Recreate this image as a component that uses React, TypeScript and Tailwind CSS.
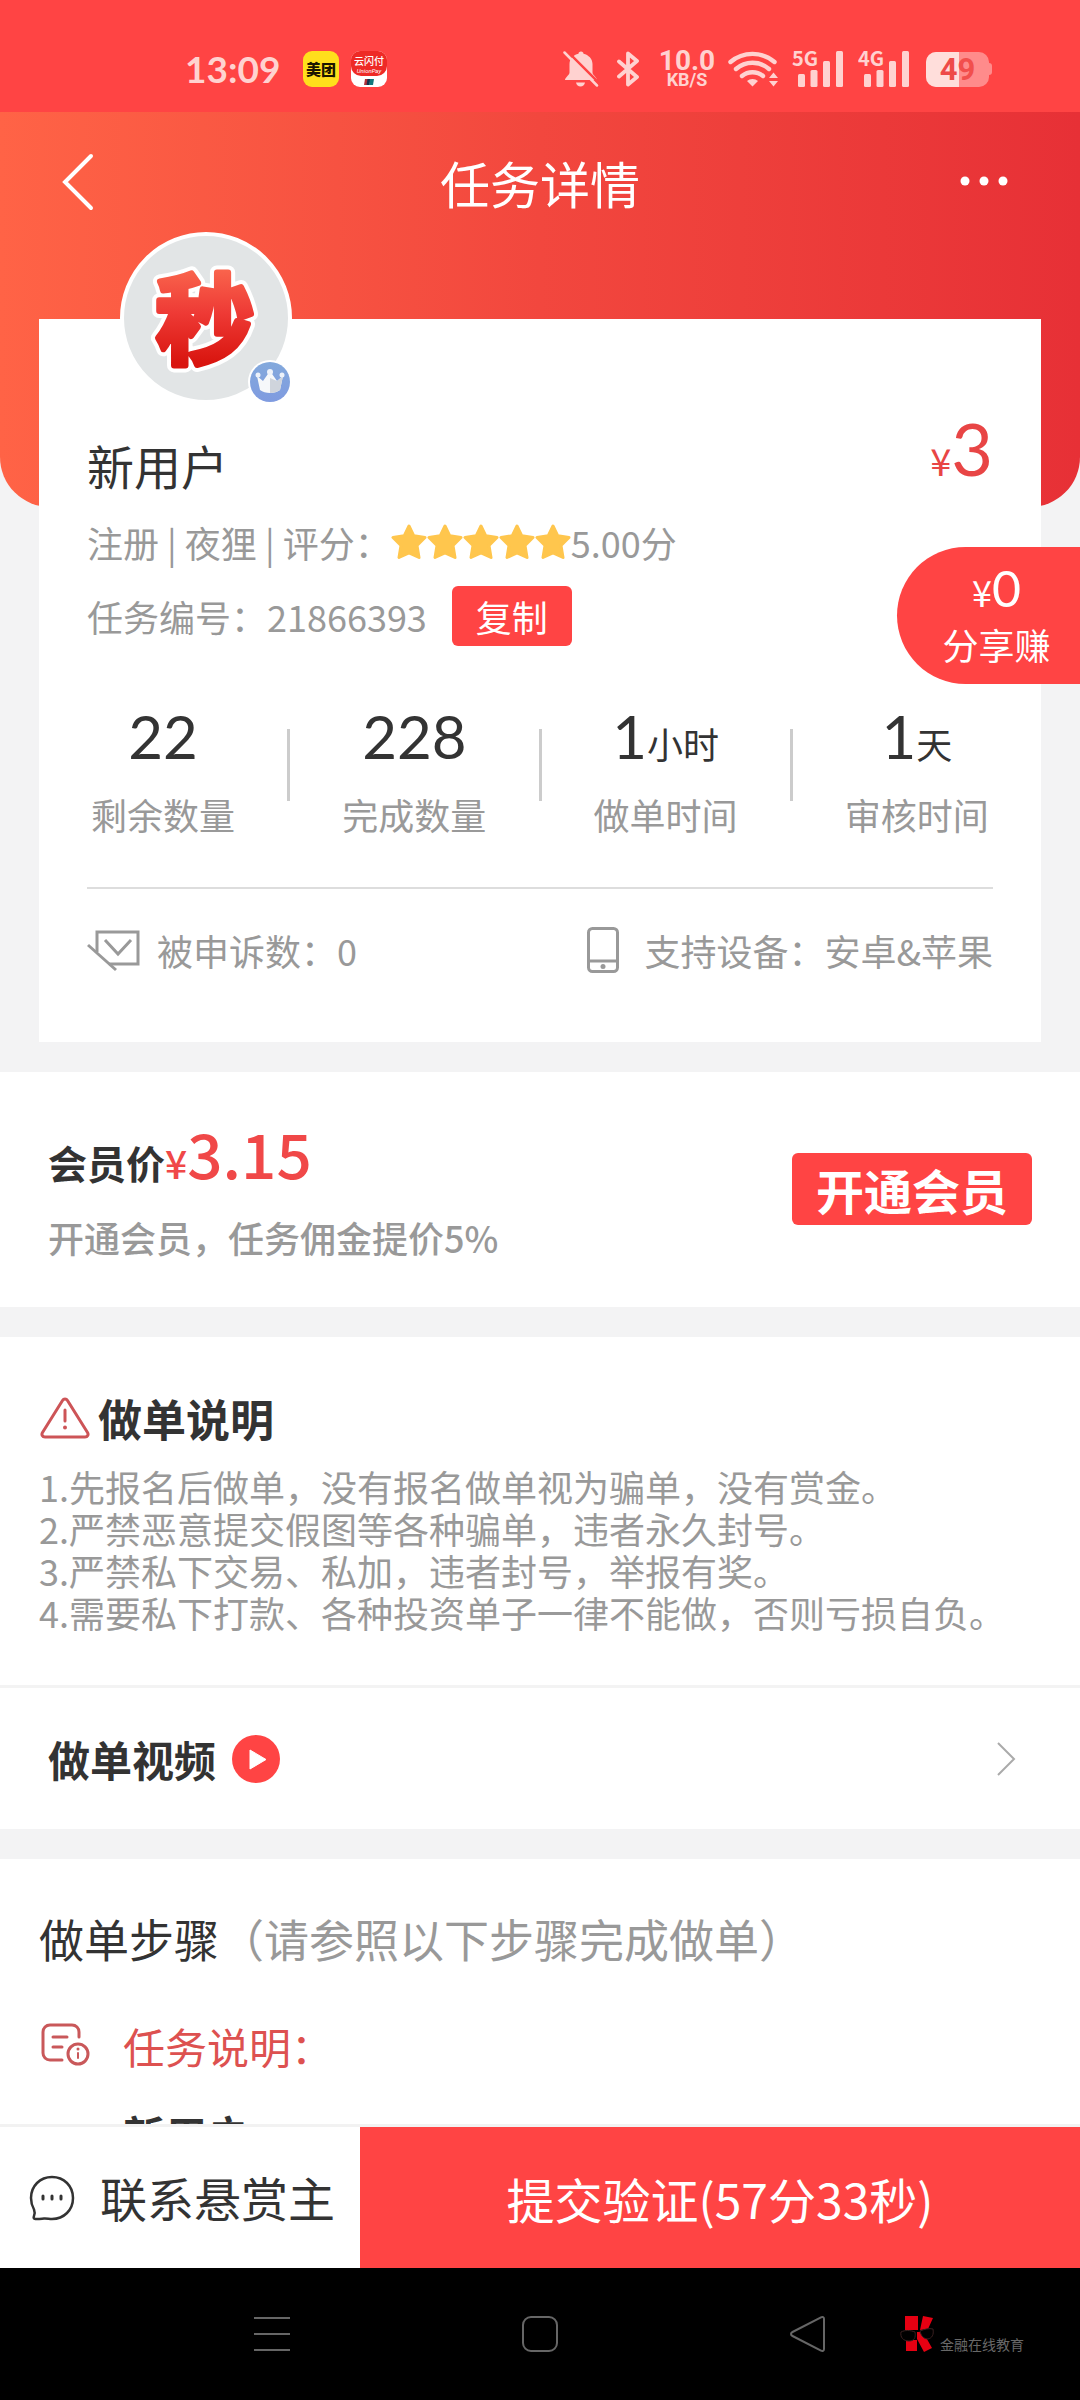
import { Fragment } from "react";

const stats = [
  { value: "22", unit: "", label: "剩余数量" },
  { value: "228", unit: "", label: "完成数量" },
  { value: "1", unit: "小时", label: "做单时间" },
  { value: "1", unit: "天", label: "审核时间" },
];

const rules = [
  "1.先报名后做单，没有报名做单视为骗单，没有赏金。",
  "2.严禁恶意提交假图等各种骗单，违者永久封号。",
  "3.严禁私下交易、私加，违者封号，举报有奖。",
  "4.需要私下打款、各种投资单子一律不能做，否则亏损自负。",
];

function BellOffIcon() {
  return (
    <svg className="h-9 w-9" viewBox="0 0 36 36" fill="none" aria-hidden>
      <path
        d="M18 0.5c1.600 0 2.400 1 2.500 2.200 5 1.200 9 5 9 10.300v8.500c0 2.500 4.500 5 4.500 7.500H2c0-2.500 4.500-5 4.500-7.500V13c0-5.300 4-9.100 9-10.300 0-1.200.9-2.200 2.500-2.200z"
        fill="#ffd2d0"
      />
      <path d="M13 31.500h9c-.5 2.500-2.300 4-4.500 4s-4-1.500-4.500-4z" fill="#ffd2d0" />
      <path d="M3 -1 38 34" stroke="#ff4444" strokeWidth="2.500" />
      <path d="M1.500 1.500 34 34.500" stroke="#ffd2d0" strokeWidth="2.500" strokeLinecap="round" />
    </svg>
  );
}

function BluetoothIcon() {
  return (
    <svg className="h-9 w-[22px]" viewBox="0 0 22 36" fill="none" aria-hidden>
      <path
        d="M2 10.500 20 26 11 33.500V2.500l9 7.500L2 25.500"
        stroke="#ffd2d0"
        strokeWidth="3.800"
        strokeLinecap="round"
        strokeLinejoin="round"
      />
    </svg>
  );
}

function WifiIcon() {
  return (
    <svg className="h-9 w-[50px]" viewBox="0 0 50 36" fill="none" aria-hidden>
      <g stroke="#ffd2d0" strokeWidth="4.400" strokeLinecap="round">
        <path d="M2.500 11a34 34 0 0 1 44 0" />
        <path d="M8 18a25 25 0 0 1 33 0" />
        <path d="M14 25a16.500 16.500 0 0 1 21 0" />
      </g>
      <path d="M24.500 35.500 19 30c3-2.800 8-2.800 11 0z" fill="#ffd2d0" />
      <path d="M45.500 21.500 50 27h-9zM45.500 35.500 50 30h-9z" fill="#ffd2d0" />
    </svg>
  );
}

function Signal({ label }: { label: string }) {
  return (
    <svg className="h-[38px] w-[52px]" viewBox="0 0 52 38" aria-hidden>
      <g fill="#ffd2d0">
        <rect x="6" y="24" width="7" height="13" rx="1.500" />
        <rect x="18.500" y="20" width="7" height="17" rx="1.500" />
        <rect x="31" y="11" width="7" height="26" rx="1.500" />
        <rect x="44" y="1" width="7" height="36" rx="1.500" />
      </g>
      <text x="0" y="16" fill="#ffd2d0" fontSize="20" fontWeight="700" fontFamily="'Noto Sans CJK SC', sans-serif">
        {label}
      </text>
    </svg>
  );
}

function Battery() {
  return (
    <div className="flex items-center">
      <div className="relative flex h-[35px] w-[63px] items-center justify-center overflow-hidden rounded-[10px] bg-[#ff8b8b]">
        <span className="absolute inset-y-0 left-0 w-[33px] bg-[#ffdedb]" />
        <span className="relative font-[Roboto,sans-serif] text-[31px] leading-none font-bold">
          <span className="text-[#ee4a48]">4</span>
          <span className="text-[#f24f4d]">9</span>
        </span>
      </div>
      <span className="h-3 w-[3px] rounded-r-sm bg-[#ff8b8b]" />
    </div>
  );
}

function StatusBar() {
  return (
    <div className="flex h-28 shrink-0 items-center justify-between bg-[#ff4444] pt-[26px] pr-[88px] pl-[185px]">
      <div className="flex items-center">
        <time className="w-[118px] font-[Lato,sans-serif] text-[37px] leading-9 font-bold text-[#ffd2d0]">13:09</time>
        <span className="flex h-9 w-9 items-center justify-center rounded-[9px] bg-[#ffdf1c] text-[15px] font-black text-[#1c1600]">
          美团
        </span>
        <span className="ml-3 flex h-9 w-9 flex-col items-center overflow-hidden rounded-[9px] bg-white">
          <span className="flex w-full flex-col items-center rounded-b-[10px] bg-[#ee2a26] pt-1 pb-[2px] text-white">
            <span className="text-[10px] leading-3 font-medium">云闪付</span>
            <span className="font-[Roboto,sans-serif] text-[6px] leading-[7px] italic">UnionPay</span>
          </span>
          <svg className="mt-[3px] h-[6px] w-[10px]" viewBox="0 0 10 6" aria-hidden>
            <path d="M1 0h4L4 6H0z" fill="#b0323a" />
            <path d="M3.500 0h3l-1 6h-3z" fill="#16314e" />
            <path d="M6 0h4L9 6H5z" fill="#12777c" />
          </svg>
        </span>
      </div>
      <div className="flex items-center">
        <BellOffIcon />
        <span className="w-[18px]" />
        <BluetoothIcon />
        <span className="ml-5 flex w-[56px] flex-col items-center font-[Roboto,sans-serif] font-bold text-[#ffd2d0]">
          <span className="text-[28px] leading-[22px]">10.0</span>
          <span className="text-[18px] leading-4">KB/S</span>
        </span>
        <span className="w-[13px]" />
        <WifiIcon />
        <span className="w-[14px]" />
        <Signal label="5G" />
        <span className="w-[14px]" />
        <Signal label="4G" />
        <span className="w-4" />
        <Battery />
      </div>
    </div>
  );
}

function Avatar() {
  return (
    <div className="relative h-[172px] w-[172px] rounded-full border-4 border-white bg-[#e2e5e6]">
      <svg className="h-full w-full" viewBox="0 0 164 164" role="img" aria-label="秒">
        <defs>
          <linearGradient id="avatar-fill" x1="0" y1="0" x2="0" y2="1">
            <stop offset="0.150" stopColor="#fb6a50" />
            <stop offset="0.500" stopColor="#ee3a35" />
            <stop offset="0.850" stopColor="#d9150f" />
          </linearGradient>
        </defs>
        <g fontFamily="'Noto Sans CJK SC', sans-serif" fontSize="98" fontWeight="700" textAnchor="middle" strokeLinejoin="round">
          <text x="81" y="120" fill="#ffffff" stroke="#ffffff" strokeWidth="14">
            秒
          </text>
          <text x="81" y="120" fill="url(#avatar-fill)" stroke="url(#avatar-fill)" strokeWidth="6">
            秒
          </text>
        </g>
      </svg>
      <svg className="absolute -right-1 -bottom-1 h-11 w-11" viewBox="0 0 44 44" aria-hidden>
        <defs>
          <linearGradient id="crown-bg" x1="0" y1="0" x2="0" y2="1">
            <stop offset="0" stopColor="#83a9dc" />
            <stop offset="1" stopColor="#7f9be0" />
          </linearGradient>
        </defs>
        <circle cx="22" cy="22" r="22" fill="#fff" />
        <circle cx="22" cy="22" r="20" fill="url(#crown-bg)" />
        <path d="M9 16l6 5 7-10 7 10 6-5-3 14c-5 4-15 4-20 0z" fill="#f6f8fa" />
        <path d="M22 18l7 3 6-5-3 14c-3 2-6 3-10 3z" fill="#cfd4dc" />
        <circle cx="22" cy="12" r="3" fill="#edf2fa" />
        <circle cx="10" cy="15" r="2.500" fill="#edf2fa" />
        <circle cx="34" cy="15" r="2.500" fill="#edf2fa" />
      </svg>
    </div>
  );
}

function Star() {
  return (
    <svg className="h-9 w-9" viewBox="0 0 36 36" aria-hidden>
      <path
        d="M18 2l4.800 9.800L34 13.500l-8 8L28 33.500 18 29 8 33.500l2-12-8-8 11.200-1.700z"
        fill="#ffc64d"
        stroke="#ffc64d"
        strokeWidth="3"
        strokeLinejoin="round"
      />
    </svg>
  );
}

function TaskCard() {
  return (
    <section className="relative mx-[39px] -mt-[188px] flow-root bg-white pb-[67px]">
      <div className="flow-root px-12 -mt-[87px]">
        <div className="ml-[33px] w-fit">
          <Avatar />
        </div>
        <div className="mt-[14px] flex items-end justify-between">
          <h2 className="text-[47px] leading-[60px] text-[#333]">新用户</h2>
          <p className="flex items-baseline pb-4 text-[#e84545]">
            <span className="text-[38px] leading-none">¥</span>
            <span className="font-[Lato,sans-serif] text-[72px] leading-[60px]">3</span>
          </p>
        </div>
        <div className="mt-[23px] flex h-12 items-center text-4xl text-[#999]">
          <span>注册 | 夜狸 | 评分：</span>
          <span className="flex">
            {[1, 2, 3, 4, 5].map((n) => (
              <Star key={n} />
            ))}
          </span>
          <span>5.00分</span>
        </div>
        <div className="mt-5 flex h-[60px] items-center gap-[25px] text-4xl text-[#999]">
          <span>任务编号：21866393</span>
          <button type="button" className="h-[60px] w-[120px] rounded-md bg-[#ff4444] text-4xl leading-[60px] text-white">
            复制
          </button>
        </div>
      </div>

      <div className="mt-[60px] flex items-center">
        {stats.map((item, index) => (
          <Fragment key={item.label}>
            {index > 0 && <span className="mb-[10px] h-[72px] w-[3px] bg-[#ccc]" />}
            <div className="flex flex-1 flex-col items-center">
              <p className="flex items-baseline text-[#333]">
                <span className="font-[Lato,sans-serif] text-6xl leading-[60px]">{item.value}</span>
                {item.unit && <span className="text-4xl leading-none">{item.unit}</span>}
              </p>
              <p className="mt-7 text-4xl leading-[40px] text-[#999]">{item.label}</p>
            </div>
          </Fragment>
        ))}
      </div>

      <hr className="mx-12 mt-[53px] h-[2px] border-0 bg-[#ddd]" />

      <div className="mx-12 mt-9 flex h-[50px] items-center justify-between text-4xl text-[#999]">
        <div className="flex items-center">
          <svg className="h-11 w-[54px]" viewBox="0 0 54 44" fill="none" stroke="#999" aria-hidden>
            <path d="M10 24V4h41v32H22" strokeWidth="3" />
            <path d="M1 17 29 42" strokeWidth="3" />
            <path d="M18 12 31 26 44 12" strokeWidth="3" />
          </svg>
          <span className="ml-4">被申诉数：0</span>
        </div>
        <div className="flex items-center">
          <svg className="h-12 w-8" viewBox="0 0 32 48" fill="none" stroke="#999" aria-hidden>
            <rect x="1.500" y="2.500" width="29" height="43" rx="4" strokeWidth="3" />
            <path d="M2 35h28" strokeWidth="3" />
            <circle cx="16" cy="40.500" r="2.500" fill="#999" stroke="none" />
          </svg>
          <span className="ml-[26px]">支持设备：安卓&amp;苹果</span>
        </div>
      </div>
    </section>
  );
}

function MemberPanel() {
  return (
    <section className="mt-[30px] flex items-center justify-between bg-white px-12 pt-[49px] pb-[50px]">
      <div>
        <p className="flex items-baseline font-medium text-[#f04848]">
          <span className="text-[39px] leading-none font-bold text-[#333]">会员价</span>
          <span className="text-[39px] leading-none">¥</span>
          <span className="text-[62px] leading-none">3.15</span>
        </p>
        <p className="mt-[34px] text-4xl leading-[40px] font-medium text-[#999]">开通会员，任务佣金提价5%</p>
      </div>
      <button type="button" className="h-[72px] w-60 rounded-md bg-[#ff4444] text-5xl leading-[72px] font-bold text-white">
        开通会员
      </button>
    </section>
  );
}

function RulesPanel() {
  return (
    <section className="mt-[30px] bg-white pt-14">
      <h2 className="flex h-[50px] items-center pl-10 text-[44px] leading-[50px] font-bold text-[#333]">
        <svg className="mr-2 h-11 w-[50px]" viewBox="0 0 50 44" fill="none" stroke="#cd5457" aria-hidden>
          <path d="M22.500 4.500c1.200-2 3.800-2 5 0l20 32c1.300 2.200.2 4.500-2.500 4.500H5c-2.700 0-3.800-2.300-2.500-4.500z" strokeWidth="3" strokeLinejoin="round" />
          <path d="M25 14v11" strokeWidth="3" strokeLinecap="round" />
          <circle cx="25" cy="31.500" r="2" fill="#cd5457" stroke="none" />
        </svg>
        <span>做单说明</span>
      </h2>
      <ul className="mt-[22px] px-[39px] pb-[52px] text-4xl leading-[42px] text-[#999]">
        {rules.map((rule) => (
          <li key={rule} className="whitespace-nowrap">
            {rule}
          </li>
        ))}
      </ul>
      <a href="#video" className="flex h-36 items-center border-t-[3px] border-[#f3f3f3] pr-16 pl-12">
        <span className="text-[42px] leading-[50px] font-bold text-[#333]">做单视频</span>
        <svg className="ml-4 h-12 w-12" viewBox="0 0 48 48" aria-hidden>
          <circle cx="24" cy="24" r="24" fill="#ff4444" />
          <path d="M18 15v19l16-9.500z" fill="#fff" stroke="#fff" strokeWidth="1" strokeLinejoin="round" />
        </svg>
        <svg className="ml-auto h-9 w-5" viewBox="0 0 20 36" fill="none" stroke="#aaa" aria-hidden>
          <path d="M2 2 18 18 2 34" strokeWidth="2" />
        </svg>
      </a>
    </section>
  );
}

function StepsPanel() {
  return (
    <section id="steps" className="mt-[30px] bg-white px-[39px] pt-[50px] pb-10">
      <h2 className="text-[45px] leading-[60px] whitespace-nowrap text-[#333]">
        做单步骤<span className="text-[#999]">（请参照以下步骤完成做单）</span>
      </h2>
      <div className="mt-[51px] flex h-[50px] items-center text-[42px] text-[#dd5150]">
        <svg className="h-11 w-[54px]" viewBox="0 0 54 44" fill="none" stroke="#c9585a" strokeWidth="3" strokeLinecap="round" aria-hidden>
          <path d="M40 14V9c0-4-3-7-7-7H11C7 2 4 5 4 9v21c0 4 3 7 7 7h12" />
          <path d="M14 14h14M14 24h9" />
          <circle cx="39" cy="31" r="10" />
          <path d="M39 30v5" strokeWidth="2" />
          <circle cx="39" cy="26" r="1.500" fill="#c9585a" stroke="none" />
        </svg>
        <h3 className="ml-[30px]">任务说明：</h3>
      </div>
      <p className="mt-[34px] ml-[84px] text-[42px] leading-[60px] font-bold text-[#333]">新用户</p>
    </section>
  );
}

function ActionBar() {
  return (
    <div className="flex h-36 shrink-0 border-t-[3px] border-[#f2f2f2] bg-white">
      <button type="button" className="flex w-1/3 items-center pl-7 text-[47px] whitespace-nowrap text-[#333]">
        <svg className="h-12 w-12 shrink-0" viewBox="0 0 48 48" fill="none" stroke="#333" aria-hidden>
          <path
            d="M24 3c12 0 21 9 21 21s-9 21-21 21c-3 0-5-.7-8-.5-3 .3-6 .8-8.500.5-2-.2-2.200-1.300-1.500-3 .8-2 1-4 0-6.500C4 32 3 28 3 24 3 12 12 3 24 3z"
            strokeWidth="2.500"
          />
          <path d="M15 22v3M24 22v3M33 22v3" strokeWidth="3" strokeLinecap="round" />
        </svg>
        <span className="ml-6">联系悬赏主</span>
      </button>
      <button type="button" className="flex-1 bg-[#ff4444] text-5xl text-white">
        提交验证(57分33秒)
      </button>
    </div>
  );
}

function SystemNav() {
  return (
    <div className="flex h-33 shrink-0 items-center bg-black pr-14 pl-[252px]">
      <nav className="flex flex-1 items-center justify-between" aria-label="系统导航">
        <button type="button" aria-label="菜单">
          <svg className="h-10 w-10" viewBox="0 0 40 40" fill="none" stroke="#666" strokeWidth="2" aria-hidden>
            <path d="M2 4h36M2 20h36M2 36h36" />
          </svg>
        </button>
        <button type="button" aria-label="主屏幕">
          <svg className="h-10 w-10" viewBox="0 0 40 40" fill="none" stroke="#666" strokeWidth="2" aria-hidden>
            <rect x="3" y="3" width="34" height="34" rx="8" />
          </svg>
        </button>
        <button type="button" aria-label="返回">
          <svg className="h-10 w-10" viewBox="0 0 40 40" fill="none" stroke="#666" strokeWidth="2" strokeLinejoin="round" aria-hidden>
            <path d="M36 5v30c0 2-1.500 2.500-3 1.700L4.500 22c-2-1-2-3 0-4L33 3.300c1.500-.8 3-.3 3 1.700z" />
          </svg>
        </button>
      </nav>
      <div className="ml-[72px] flex items-end">
        <svg className="h-9 w-9" viewBox="0 0 36 36" aria-hidden>
          <path d="M5 0h13v14H5zM23 0l10 2-5 11-8 1zM6 24h11v11H6zM17 16h6l9 16-8 4-7-13z" fill="#e60012" />
          <path d="M1 16c4-2 9-2 14 0 1 6-1 9-6 9-6 0-9-4-8-9zM20 15c5-2 9-3 13-2 1 6-1 9-5 10-4 0-7-3-8-8z" fill="#000" stroke="#3a2020" strokeWidth="1" />
        </svg>
        <span className="ml-1 text-sm leading-4 text-[#686868]">金融在线教育</span>
      </div>
    </div>
  );
}

export default function App() {
  return (
    <div className="flex h-screen flex-col bg-[#f3f3f4] font-['Noto_Sans_CJK_SC',sans-serif]">
      <StatusBar />
      <main className="relative min-h-0 flex-1 overflow-y-auto [scrollbar-width:none]">
        <header className="h-[395px] rounded-b-[50px] bg-linear-to-r from-[#ff6346] via-[#f2473e] to-[#e73036]">
          <div className="flex h-[140px] items-center justify-between px-[60px]">
            <button type="button" className="w-[60px]" aria-label="返回">
              <svg className="h-[58px] w-9" viewBox="0 0 36 58" fill="none" stroke="#fff" strokeWidth="4" strokeLinecap="round" aria-hidden>
                <path d="M31 3 5 29l26 26" />
              </svg>
            </button>
            <h1 className="text-[50px] leading-[60px] text-white">任务详情</h1>
            <button type="button" className="w-[60px]" aria-label="更多">
              <svg className="h-3 w-12" viewBox="0 0 48 12" fill="#fff" aria-hidden>
                <circle cx="5" cy="5" r="4.500" />
                <circle cx="24" cy="5" r="4.500" />
                <circle cx="43" cy="5" r="4.500" />
              </svg>
            </button>
          </div>
        </header>
        <TaskCard />
        <MemberPanel />
        <RulesPanel />
        <StepsPanel />
        <button
          type="button"
          className="absolute top-[435px] right-0 flex h-[137px] w-[183px] flex-col items-center justify-center rounded-l-full bg-[#ff4444] pl-4 text-white"
        >
          <span className="flex items-baseline">
            <span className="text-4xl leading-none">¥</span>
            <span className="font-[Lato,sans-serif] text-[50px] leading-[56px]">0</span>
          </span>
          <span className="text-4xl leading-[56px]">分享赚</span>
        </button>
      </main>
      <ActionBar />
      <SystemNav />
    </div>
  );
}
